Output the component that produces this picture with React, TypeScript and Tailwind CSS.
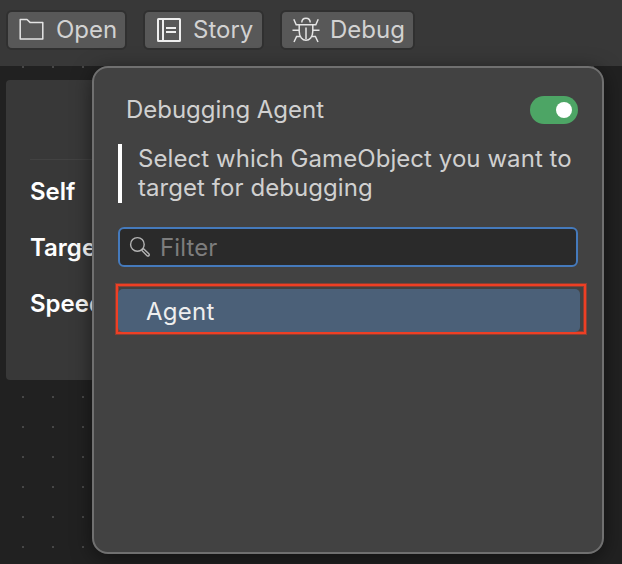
import type { ReactNode } from "react";

function FolderIcon() {
  return (
    <svg width="26" height="24" viewBox="0 0 26 24" fill="none" stroke="#e4e4e4" strokeWidth="1.5" className="shrink-0">
      <path d="M1.2 21V1.5H8L11 4.4H23.8V21Z" strokeLinejoin="round" />
    </svg>
  );
}

function StoryIcon() {
  return (
    <svg width="24" height="24" viewBox="0 0 24 24" fill="none" stroke="#eeeeee" strokeWidth="2" className="shrink-0">
      <rect x="1" y="1" width="22" height="22" rx="0.5" />
      <path d="M6 1V23M9 10H19M9 14H19" />
    </svg>
  );
}

function BugIcon() {
  return (
    <svg width="28" height="26" viewBox="0 0 28 26" fill="none" stroke="#e4e4e4" strokeWidth="1.5" className="shrink-0">
      <path d="M9.8 5.6C9.8 -0.3 18.2 -0.3 18.2 5.6" />
      <path d="M1.8 2.2L4.2 7.8H23.8L26.2 2.2" />
      <path d="M7.2 8V14.2C7.2 26.2 20.8 26.2 20.8 14.2V8" />
      <path d="M14 10.5V22M0.5 13.3H7M21 13.3H27.5M2 25L4.6 19.4H8.2M26 25L23.4 19.4H19.8" />
    </svg>
  );
}

function SearchIcon() {
  return (
    <svg width="22" height="22" viewBox="0 0 22 22" fill="none" stroke="#b4b4b4" strokeWidth="1.4" className="shrink-0">
      <circle cx="8.4" cy="8.4" r="6.8" />
      <path d="M13.2 13.2L14.6 12.8L19.8 17.8C21 19.1 19.4 20.8 18 19.7L12.9 14.6Z" />
    </svg>
  );
}

function ToolButton({ icon, label, className }: { icon: ReactNode; label: string; className: string }) {
  return (
    <button className={`flex h-10 items-center rounded-md border-2 border-[#303030] bg-[#585858] text-[#d2d2d2] ${className}`}>
      {icon}
      <span className="pb-px whitespace-nowrap">{label}</span>
    </button>
  );
}

export default function App() {
  return (
    <div className="relative flex h-[564px] w-[622px] flex-col overflow-hidden bg-[#212121] font-['Inter','Liberation_Sans',sans-serif] text-[24px] leading-[29px] tracking-[0px] text-[#d0d0d0]">
      <header className="flex h-[66px] shrink-0 gap-4 bg-[#383838] pt-2.5 pl-1.5">
        <ToolButton icon={<FolderIcon />} label="Open" className="w-[121px] gap-[11px] pl-[11px]" />
        <ToolButton icon={<StoryIcon />} label="Story" className="w-[121px] gap-3 pl-3" />
        <ToolButton icon={<BugIcon />} label="Debug" className="w-[135px] gap-2.5 pl-2.5" />
      </header>

      <main className="flex-1">
        <div className="h-full bg-[#212121] bg-[conic-gradient(from_270deg_at_2px_2px,#474747_90deg,transparent_0)] bg-[length:30px_30px] bg-[position:22px_0px] pt-3.5 pl-1.5">
          <section className="h-[300px] w-[300px] rounded bg-[#383838] pt-[79px] pl-6 font-semibold text-white">
            <div className="flex flex-col gap-[27px] border-t border-[#424242] pt-[17px]">
              <span>Self</span>
              <span>Target</span>
              <span>Speed</span>
            </div>
          </section>
        </div>
      </main>

      <div className="absolute top-[66px] left-[92px] flex h-[488px] w-[512px] flex-col rounded-2xl border-2 border-[#707070] bg-[#424242] px-6 pt-7 shadow-[0_4px_20px_rgba(0,0,0,0.5)]">
        <div className="flex h-7 items-center justify-between pl-2">
          <span className="pb-px tracking-[-0.03px]">Debugging Agent</span>
          <div className="flex h-7 w-12 items-center justify-end rounded-full bg-[#4da565] pr-1.5">
            <div className="size-4 rounded-full bg-white" />
          </div>
        </div>
        <p className="mt-5 border-l-4 border-white pb-px pl-4 tracking-[0.06px] whitespace-nowrap">
          Select which GameObject you want to
          <br />
          target for debugging
        </p>
        <div className="mt-6 flex h-10 w-[460px] shrink-0 items-center gap-2 rounded-md border-2 border-[#457abc] bg-[#2a2a2a] pl-[9px] text-[#7d7d7d]">
          <SearchIcon />
          <span className="pl-px tracking-[0.1px]">Filter</span>
        </div>
        <div className="mt-[17px] -ml-[2px] h-[50px] w-[470px] shrink-0 border-2 border-[#ee3f24] pt-[3px] pr-[4px] shadow-[0_0_0_1px_#8a4034,inset_0_0_0_1px_#8a4034]">
          <div className="flex h-[43px] items-center rounded-[5px] bg-[#4b6078] pt-0.5 pl-7 tracking-[0.25px] text-[#eeeeee]">Agent</div>
        </div>
      </div>
    </div>
  );
}
